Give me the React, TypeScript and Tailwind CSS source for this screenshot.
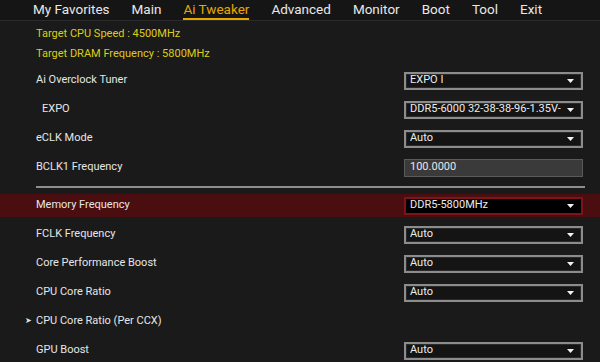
import * as React from 'react';

const tabs = ['My Favorites', 'Main', 'Ai Tweaker', 'Advanced', 'Monitor', 'Boot', 'Tool', 'Exit'];

type Row = {
  label: string;
  value?: string;
  kind?: 'select' | 'input' | 'sub';
  indent?: boolean;
  active?: boolean;
};

const topRows: Row[] = [
  { label: 'Ai Overclock Tuner', value: 'EXPO I' },
  { label: 'EXPO', value: 'DDR5-6000 32-38-38-96-1.35V-', indent: true },
  { label: 'eCLK Mode', value: 'Auto' },
  { label: 'BCLK1 Frequency', value: '100.0000', kind: 'input' },
];

const bottomRows: Row[] = [
  { label: 'Memory Frequency', value: 'DDR5-5800MHz', active: true },
  { label: 'FCLK Frequency', value: 'Auto' },
  { label: 'Core Performance Boost', value: 'Auto' },
  { label: 'CPU Core Ratio', value: 'Auto' },
  { label: 'CPU Core Ratio (Per CCX)', kind: 'sub' },
  { label: 'GPU Boost', value: 'Auto' },
];

function Caret(): React.ReactElement {
  return (
    <svg width="7" height="4" viewBox="0 0 7 4" className="shrink-0">
      <path d="M0 0h7L3.5 4z" fill="#f2f2f2" />
    </svg>
  );
}

function Field({ row }: { row: Row }): React.ReactElement | null {
  if (!row.value) return null;
  if (row.kind === 'input') {
    return (
      <div className="flex h-[18px] w-[179px] items-center border border-[#5a5a5a] bg-[#3a3a3a] px-[5px] text-[11px] text-[#e8e8e8]">
        {row.value}
      </div>
    );
  }
  return (
    <div
      className={
        row.active
          ? 'flex h-[18px] w-[179px] items-center justify-between border-2 border-[#7c1419] bg-black pl-[4px] pr-[7px] text-[11px] text-[#ececec]'
          : 'flex h-[18px] w-[179px] items-center justify-between border-2 border-[#8c8c8c] bg-[#141414] pl-[4px] pr-[7px] text-[11px] text-[#ececec] shadow-[inset_0_0_0_1px_#2a2a2a]'
      }
    >
      <span className="truncate">{row.value}</span>
      <Caret />
    </div>
  );
}

function SettingRow({ row }: { row: Row }): React.ReactElement {
  return (
    <div
      className={
        row.active
          ? 'flex h-[23px] shrink-0 items-center justify-between bg-[#4a0e10] pr-[17px]'
          : 'flex h-[23px] shrink-0 items-center justify-between pr-[17px]'
      }
    >
      <div className="relative flex items-center pl-[36px] text-[11px] text-[#e6e6e6]">
        {row.kind === 'sub' && (
          <span className="absolute left-[25px] top-[4px] text-[8px] leading-none text-[#e6e6e6]">➤</span>
        )}
        <span className={row.indent ? 'pl-[6px]' : ''}>{row.label}</span>
      </div>
      <Field row={row} />
    </div>
  );
}

export default function App(): React.ReactElement {
  return (
    <div
      className="h-[362px] w-[600px] overflow-hidden bg-[#1a1a1a]"
      style={{ fontFamily: 'Roboto, "Open Sans", sans-serif' }}
    >
      <nav className="flex h-[21px] items-start gap-[22px] border-b border-[#2b2b2b] bg-[#151515] pl-[33px] text-[13.5px] leading-[18px] text-[#e8e8e8]">
        {tabs.map((t) => (
          <span
            key={t}
            className={
              t === 'Ai Tweaker'
                ? 'border-b-2 border-[#e6a800] text-[#e6a800]'
                : ''
            }
          >
            {t}
          </span>
        ))}
      </nav>

      <div className="pt-[3px] pl-[36px] text-[11px] text-[#dccd1a]">
        <div className="flex h-[20px] items-center">Target CPU Speed : 4500MHz</div>
        <div className="flex h-[20px] items-center">Target DRAM Frequency : 5800MHz</div>
      </div>

      <div className="flex flex-col gap-[6px] pt-[5px]">
        {topRows.map((r) => (
          <SettingRow key={r.label} row={r} />
        ))}
        <div className="ml-[36px] mr-[15px] mt-[1px] h-[2px] shrink-0 bg-[#8e8e8e]" />
        {bottomRows.map((r) => (
          <SettingRow key={r.label} row={r} />
        ))}
      </div>
    </div>
  );
}
